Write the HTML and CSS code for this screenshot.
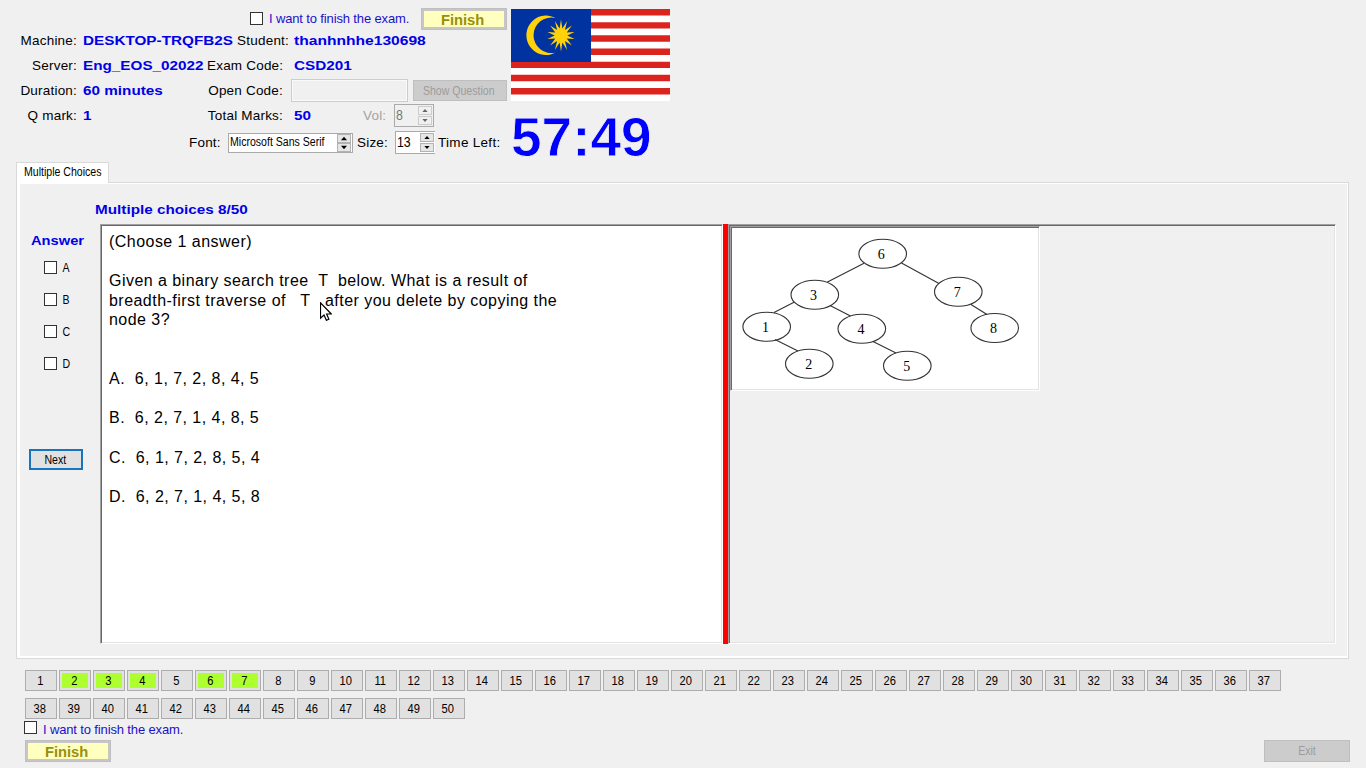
FILE: index.html
```html
<!DOCTYPE html>
<html lang="en">
<head>
<meta charset="utf-8">
<title>Exam</title>
<link rel="stylesheet" href="styles.css">
</head>
<body>
<header class="header">
  <div class="info">
    <div class="top-row">
      <span class="check"></span><span class="agree">I want to finish the exam.</span>
      <button class="finish"><b>Finish</b></button>
    </div>
    <div class="row">
      <span class="label">Machine:</span><span class="val"><b>DESKTOP-TRQFB2S</b></span>
      <span class="label2 wide">Student:</span><span class="val2"><b>thanhnhhe130698</b></span>
    </div>
    <div class="row">
      <span class="label">Server:</span><span class="val"><b>Eng_EOS_02022</b></span>
      <span class="label2">Exam Code:</span><span class="val2"><b>CSD201</b></span>
    </div>
    <div class="row">
      <span class="label">Duration:</span><span class="val"><b>60 minutes</b></span>
      <span class="label2">Open Code:</span><span class="code-input"></span>
      <button class="btn off show"><i>Show Question</i></button>
    </div>
    <div class="row">
      <span class="label">Q mark:</span><span class="val"><b>1</b></span>
      <span class="label2">Total Marks:</span><span class="val2 marks"><b>50</b></span>
      <span class="vol-label">Vol:</span>
      <span class="spin vol"><i>8</i><span class="arrows"><svg viewBox="0 0 7 4"><path d="M0 4L3.5 0L7 4z"/></svg><svg viewBox="0 0 7 4"><path d="M0 0L3.5 4L7 0z"/></svg></span></span>
    </div>
    <div class="row font-row">
      <span class="font-label">Font:</span>
      <span class="spin font"><i>Microsoft Sans Serif</i><span class="arrows"><svg viewBox="0 0 7 4"><path d="M0 4L3.5 0L7 4z"/></svg><svg viewBox="0 0 7 4"><path d="M0 0L3.5 4L7 0z"/></svg></span></span>
      <span class="size-label">Size:</span>
      <span class="spin size"><i>13</i><span class="arrows"><svg viewBox="0 0 7 4"><path d="M0 4L3.5 0L7 4z"/></svg><svg viewBox="0 0 7 4"><path d="M0 0L3.5 4L7 0z"/></svg></span></span>
      <span class="time-label">Time Left:</span>
    </div>
  </div>
  <div class="side">
    <svg class="flag" viewBox="0 0 159 92" preserveAspectRatio="none">
      <rect width="159" height="92" fill="#fff"/>
      <path d="M0 3.2H159M0 16.4H159M0 29.5H159M0 42.7H159M0 55.9H159M0 69H159M0 82.2H159" stroke="#dc241f" stroke-width="6.4"/>
      <rect width="80" height="53" fill="#0032a0"/>
      <path d="M44.5 9A19.7 19.7 0 1 0 44.5 43.6A17.8 17.8 0 1 1 44.5 9z" fill="#ffd20a"/>
      <polygon fill="#ffd20a" points="50,10.5 51.4,19.5 56.1,12.1 53.9,20.9 60.9,16.5 55.7,23.4 63.6,22.9 56.3,26.5 63.6,30.1 55.7,29.6 60.9,36.5 53.9,32.1 56.1,40.9 51.4,33.5 50,42.5 48.6,33.5 43.9,40.9 46.1,32.1 39.1,36.5 44.3,29.6 36.4,30.1 43.7,26.5 36.4,22.9 44.3,23.4 39.1,16.5 46.1,20.9 43.9,12.1 48.6,19.5"/>
    </svg>
    <div class="time">57:49</div>
  </div>
</header>

<main class="tabs">
  <div class="tab"><i>Multiple Choices</i></div>
  <div class="panel">
    <h1 class="title"><b>Multiple choices 8/50</b></h1>
    <div class="work">
      <aside class="answers">
        <div class="answer-title"><b>Answer</b></div>
        <label class="opt"><span class="check"></span><i>A</i></label>
        <label class="opt"><span class="check"></span><i>B</i></label>
        <label class="opt"><span class="check"></span><i>C</i></label>
        <label class="opt"><span class="check"></span><i>D</i></label>
        <button class="btn next"><i>Next</i></button>
      </aside>
      <div class="question sunken">(Choose 1 answer)

Given a binary search tree  T  below. What is a result of
breadth-first traverse of   T   after you delete by copying the
node 3?


A.  6, 1, 7, 2, 8, 4, 5

B.  6, 2, 7, 1, 4, 8, 5

C.  6, 1, 7, 2, 8, 5, 4

D.  6, 2, 7, 1, 4, 5, 8<svg class="cursor" viewBox="0 0 12 19"><path d="M.5 .8V16.3L4 13L6.4 18.3L8.9 17.2L6.6 12H11.3z" fill="#fff" stroke="#000" stroke-width="1.2"/></svg></div>
      <div class="splitter"></div>
      <div class="picture-pane sunken">
        <div class="picture sunken">
          <svg class="tree" viewBox="732 228 306 161">
            <path d="M864 263.3L827 282.3M901.5 263L939 283.5M794 302.3L774 312.5M830 305.5L850.5 316M971 304.5L987 314.5M775 339.5L798 351M873 341.5L896 353"/>
            <g>
              <ellipse cx="882.7" cy="253.8" rx="23.8" ry="14.5"/><ellipse cx="814.8" cy="294.8" rx="23.8" ry="14.5"/>
              <ellipse cx="958.3" cy="291.8" rx="23.8" ry="14.5"/><ellipse cx="766.7" cy="326.7" rx="23.8" ry="14.5"/>
              <ellipse cx="861.8" cy="328.7" rx="23.8" ry="14.5"/><ellipse cx="994.7" cy="328" rx="23.8" ry="14.5"/>
              <ellipse cx="809.3" cy="363.8" rx="23.8" ry="14.5"/><ellipse cx="907.3" cy="365.7" rx="23.8" ry="14.5"/>
            </g>
            <text x="881.3" y="259.3">6</text><text x="813.5" y="300.3">3</text><text x="957.3" y="297.3">7</text><text x="765.5" y="332.3">1</text>
            <text x="861" y="334.3">4</text><text x="993.5" y="333.3">8</text><text x="808.7" y="369.3">2</text><text x="906.7" y="371.3">5</text>
          </svg>
        </div>
      </div>
    </div>
  </div>
</main>

<nav class="numbers" id="numbers"></nav>
<footer class="footer">
  <div class="foot-left">
    <div class="foot-agree"><span class="check"></span><span class="agree">I want to finish the exam.</span></div>
    <button class="finish"><b>Finish</b></button>
  </div>
  <button class="btn off exit"><i>Exit</i></button>
</footer>
<script src="script.js"></script>
</body>
</html>
```
FILE: script.js
```js
const done = [2, 3, 4, 6, 7];
const nav = document.getElementById("numbers");
for (let n = 1; n <= 50; n++) {
  const b = document.createElement("button");
  b.className = done.includes(n) ? "num done" : "num";
  const t = document.createElement("i");
  t.textContent = n;
  b.append(t);
  nav.append(b);
}
```
FILE: styles.css
```css
* { box-sizing: border-box; }
body { margin: 0; width: 1366px; height: 768px; overflow: hidden; background: #f0f0f0; color: #000;
  font: 13px/16px "Liberation Sans", Arial, sans-serif; }
button { font: inherit; color: inherit; padding: 0; margin: 0; display: flex; align-items: center; justify-content: center; }
b { display: inline-block; font-weight: bold; color: #0000e6; transform: scaleX(1.175); transform-origin: 0 50%; white-space: nowrap; }
i { display: inline-block; font-style: normal; font-size: 12px; transform: scaleX(.88); white-space: nowrap; }
.check { flex: none; width: 13px; height: 13px; border: 1px solid #333; background: #fff; }
.agree { color: #1a10cc; letter-spacing: -.14px; white-space: nowrap; }

.header { display: flex; height: 162px; }
.info { width: 511px; flex: none; }
.top-row { display: flex; align-items: center; height: 28px; padding: 10px 4px 0 250px; }
.top-row .check { margin-bottom: 2px; }
.top-row .agree { margin-left: 6px; width: 146px; }
.top-row .finish { margin-left: 6px; }
.finish { flex: none; width: 86px; height: 22px; background: #ffffc0; border: 3px solid #c6c6c6; outline: 1px solid #bfbfbf; outline-offset: -1px; }
.finish b { color: #96900c; font-size: 14px; transform: scaleX(1.05); transform-origin: 50% 50%; margin-right: 3px; padding-top: 2px; }
.row { display: flex; align-items: center; height: 25px; font-size: 13.5px; letter-spacing: .2px; white-space: nowrap; }
.row b { letter-spacing: 0; font-size: 13px; }
.label { width: 77px; text-align: right; }
.val { width: 124px; margin-left: 6px; }
.label2 { width: 76px; text-align: right; direction: rtl; unicode-bidi: plaintext; }
.label2.wide { width: 82px; }
.val2 { margin-left: 11px; }
.wide + .val2 { margin-left: 5px; }
.wide + .val2 b { transform: scaleX(1.2); }
.code-input { width: 117px; height: 23px; margin-left: 8px; border: 1px solid #ccc; box-shadow: inset 0 0 0 1px #fafafa; }
.btn { background: #e1e1e1; border: 1px solid #adadad; }
.off { background: #ccc; border-color: #bfbfbf; color: #9c9c9c; }
.show { width: 94px; height: 21px; margin-left: 5px; letter-spacing: 0; }
.show i { margin-right: 2px; }
.marks { width: 69px; }
.vol-label { color: #a3a3a3; width: 31px; }
.spin { display: flex; justify-content: space-between; align-items: center; height: 23px; border: 1px solid #aaa; background: #fff; letter-spacing: 0; padding: 0 1px 0 1px; }
.spin i { transform-origin: 0 50%; font-size: 14px; padding-bottom: 2px; }
.spin .arrows { gap: 1px; }
.arrows { display: flex; flex-direction: column; width: 14px; height: 19px; flex: none; }
.arrows svg { display: block; flex: 1 1 0; min-height: 0; width: 14px; padding: 2px 3px; background: #e6e6e6; border: 1px solid #b2b2b2; }
.vol { width: 40px; background: #f0f0f0; color: #777; }
.vol .arrows svg { background: #f0f0f0; border-color: #ccc; fill: #666; }
.font-row { height: 29px; }
.font-label { width: 228px; padding-left: 189px; }
.font { width: 125px; height: 20px; }
.font i { font-size: 12px; width: 106px; padding-bottom: 1px; }
.font .arrows { height: 18px; gap: 0; }
.font .arrows svg { padding: 1px 3px; }
.size-label { width: 42px; padding-left: 4px; }
.size { width: 40px; border-right: 0; }
.time-label { margin-left: 3px; letter-spacing: .3px; }
.flag { display: block; width: 159px; height: 92px; margin-top: 9px; }
.time { font-size: 55px; line-height: 62px; font-weight: bold; color: #00f; margin-top: 5px; -webkit-text-stroke: .8px #f0f0f0; }

.tabs { margin: 0 17px 0 16px; height: 497px; }
.tab { position: relative; z-index: 1; width: 93px; height: 21px; background: #fff; border: 1px solid #d9d9d9; border-bottom: 0; padding: 1px 0 0 7px; }
.tab i { transform-origin: 0 50%; }
.panel { height: 477px; margin-top: -1px; border: 1px solid #d9d9d9; box-shadow: inset 3px 0 #fff, inset 0 1px #fff, inset -1px 0 #fff, inset 0 -2px #fff; padding: 19px 12px 0 10px; }
.title { margin: 0 0 6px 68px; font-size: 13px; line-height: 16px; }
.work { display: flex; height: 420px; }
.answers { width: 73px; flex: none; padding: 9px 0 0 2px; }
.answer-title { padding-left: 2px; height: 28px; }
.answer-title b { transform: scaleX(1.13); }
.opt { display: flex; align-items: center; height: 13px; margin: 0 0 19px 15px; }
.opt i { margin-left: 5px; }
.next { width: 54px; height: 21px; border: 2px solid #1874bd; margin-top: 79px; }
.next i { margin-right: 2px; }
.sunken { border: 1px solid; border-color: #a0a0a0 #fff #fff #a0a0a0; box-shadow: inset 1px 1px #696969, inset -1px -1px #e3e3e3; }
.question { position: relative; width: 623px; flex: none; background: #fff; padding: 7px 8px; white-space: pre; font-size: 16px; line-height: 19.6px; letter-spacing: .46px; }
.cursor { position: absolute; left: 219px; top: 77px; width: 12px; height: 19px; }
.splitter { width: 5px; flex: none; background: #f00; }
.picture-pane { flex: 1; padding: 1px; }
.picture { width: 310px; height: 165px; padding: 1px; background: #fff; }
.tree { display: block; width: 306px; height: 161px; fill: none; stroke: #333; stroke-width: 1.1; }
.tree text { font: 14px "Liberation Serif", serif; fill: #000; stroke: none; text-anchor: middle; }

.numbers { display: flex; flex-wrap: wrap; gap: 7px 2px; padding: 11px 80px 0 25px; }
.num { width: 32px; height: 21px; border: 1px solid #adadad; background: #e1e1e1; }
.num i { margin-right: 2px; transform: scaleX(.93); }
.done { background: #adff2f; box-shadow: inset 0 0 0 2px #e1e1e1; }
.footer { display: flex; justify-content: space-between; align-items: flex-end; height: 43px; padding: 0 16px 0 25px; }
.foot-agree { display: flex; align-items: center; margin-left: -1px; height: 19px; }
.foot-agree .check { margin-bottom: 3px; }
.foot-agree .agree { margin-left: 6px; padding-top: 2px; }
.foot-left .finish { margin-top: 2px; }
.exit { width: 86px; height: 22px; }
```
